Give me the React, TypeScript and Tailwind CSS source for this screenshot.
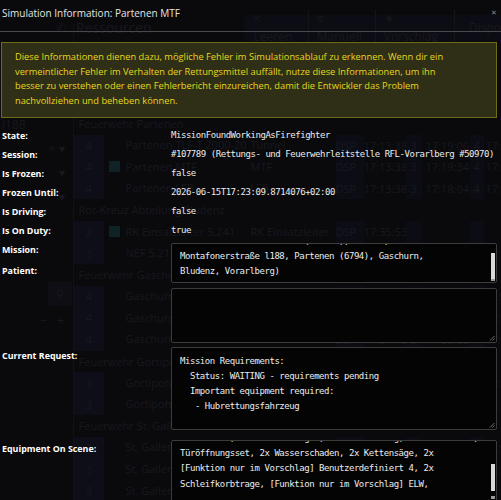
import React from 'react';

type GhostRow = { group?: string; n?: string; name?: string; short?: string; t1?: string; t2?: string; check?: boolean };

const ghostRows: GhostRow[] = [
  { group: 'Feuerwehr Partenen' },
  { n: '4', name: 'Partenen TLF-T 2000-200', short: 'Tunnel', t1: '17:13:38', t2: '17:19:06' },
  { n: '4', name: 'Partenen MTF', short: 'MTF', t1: '17:13:38', t2: '17:19:34', check: true },
  { n: '4', name: 'Partenen LFB', short: 'LFB', t1: '17:13:38', t2: '17:18:04' },
  { group: 'Rot-Kreuz Abteilung Bludenz' },
  { n: '2', name: 'RK Einsatzleiter 5.241', short: 'RK Einsatzleiter', t1: '17:35:53', check: true },
  { n: '3', name: 'NEF 5.211', short: 'NEF', t1: '17:31:12', t2: '17:35:26' },
  { group: 'Feuerwehr Gaschurn' },
  { n: '4', name: 'Gaschurn TLFA 2000', short: 'TLF', t1: '17:31:12', t2: '17:35:34' },
  { n: '4', name: 'Gaschurn LFB-A', short: 'LFB-A', t1: '17:31:12', t2: '17:35:59' },
  { n: '4', name: 'Gaschurn KDOF', short: 'KDOF', t1: '17:31:12', t2: '17:35:55' },
  { group: 'Feuerwehr Gortipohl' },
  { n: '3', name: 'Gortipohl LFBA', short: 'LFBA', t1: '17:31:12', t2: '17:36:00' },
  { n: '3', name: 'Gortipohl LFA', short: 'LFA', t1: '17:31:12', t2: '17:35:39' },
  { group: 'Feuerwehr St. Gallenkirch' },
  { n: '3', name: 'St. Gallenkirch TLF-T', short: 'TLF', t1: '17:31:12', t2: '17:35:53' },
  { n: '3', name: 'St. Gallenkirch KDOF', short: 'KDOF', t1: '17:31:12', t2: '17:36:15' },
  { n: '3', name: 'St. Gallenkirch LFB-C', short: 'LFB-C', t1: '17:31:12', t2: '17:36:22' },
];

// dimmed app behind the dialog
const Backdrop = () => (
  <div className="flex flex-col text-[#18181f] font-['Open_Sans',sans-serif]">
    <div className="h-[46px] flex items-start pt-[15px]">
      <div className="w-[80px] flex justify-end pr-[10px] text-[12px] leading-[26px]">✆</div>
      <div className="w-[178px] text-[14px] leading-[26px]">Ressourcen</div>
      <div className="flex h-[26px] items-center bg-[#0c0d14] text-[12px]">
        <div className="px-[10px] border-r border-[#14141b]">× Leeren</div>
        <div className="px-[8px] border-r border-[#14141b]">≡ Manuell</div>
        <div className="px-[8px] border-r border-[#14141b]">☀ Vorschlag</div>
        <div className="pl-[14px]">Dispo</div>
      </div>
    </div>
    <div className="flex">
      <div className="w-[78px] border-r border-[#111116] flex flex-col text-[12px] pl-[2px] pt-[68px] gap-[6px] -mt-[22px]">
        <div>Objekt</div>
        <div>l188</div>
        <div className="text-right pr-[8px]">× ▾</div>
        <div className="text-right pr-[8px]">▾</div>
        <div className="text-right pr-[8px]">▾</div>
        <div className="ml-[46px] mt-[70px] w-[24px] h-[24px] bg-[#0e0e14] text-center text-[11px] leading-[24px]">⚲</div>
        <div className="flex ml-[38px] gap-[10px]"><span>−</span><span>+</span></div>
      </div>
      <div className="flex-1 flex flex-col text-[11px] pt-[67px]">
        {ghostRows.map((r, i) =>
          r.group ? (
            <div key={i} className="h-[21.6px] leading-[21.6px] pl-[5px]">{r.group}</div>
          ) : (
            <div key={i} className="h-[21.6px] flex items-center">
              <div className="w-[30px] h-full bg-[#0d0e18] text-center leading-[21.6px]">{r.n}</div>
              <div className="w-[22px] flex justify-center">
                {r.check && <div className="w-[11px] h-[11px] bg-[#0f2226]" />}
              </div>
              <div className="w-[120px] whitespace-nowrap overflow-hidden">{r.name}</div>
              <div className="w-[90px] whitespace-nowrap overflow-hidden pl-[5px]">{r.short}</div>
              <div className="w-[28px] bg-[#0c0d14] h-full leading-[21.6px]">DSP</div>
              <div className="w-[42px] leading-[21.6px]">{r.t1}</div>
              <div className="w-[16px] bg-[#0c0d14] h-full leading-[21.6px] text-center">{r.t2 ? '3' : ''}</div>
              <div className="w-[48px] leading-[21.6px] pl-[4px]">{r.t2}</div>
              <div className="w-[14px] bg-[#0c0d14] h-full leading-[21.6px] text-center">{r.t2 ? '4' : ''}</div>
              <div className="leading-[21.6px] pl-[2px]">{r.t2 ? '17:' : ''}</div>
            </div>
          )
        )}
      </div>
    </div>
  </div>
);

const mono = "font-['DejaVu_Sans_Mono',monospace] text-[9px] tracking-[-0.45px] text-[#ececec] whitespace-pre";

const Resize = () => (
  <svg className="absolute right-[1px] bottom-[1px]" width="6" height="6" viewBox="0 0 6 6">
    <path d="M5.5 1 L1 5.5 M5.5 3.5 L3.5 5.5" stroke="#8a8a8a" strokeWidth="0.8" />
  </svg>
);

const Scroll = ({ top, h }: { top: string; h: string }) => (
  <div className={`absolute right-[1px] ${top} ${h} w-[4px] bg-[#d9d9d9]`} />
);

const Box = ({ className, children }: { className: string; children?: React.ReactNode }) => (
  <div className={`relative overflow-hidden border border-[#3c3c3c] bg-[#040405] rounded-[2px] ${className}`}>{children}</div>
);

const Label = ({ children, className = '' }: { children: React.ReactNode; className?: string }) => (
  <div className={`h-[19px] leading-[19px] font-bold text-white whitespace-nowrap ${className}`}>{children}</div>
);

const Val = ({ children }: { children: React.ReactNode }) => (
  <div className={`${mono} h-[19px] leading-[19px]`}>{children}</div>
);

export default function App() {
  return (
    <div className="relative w-[501px] h-[500px] overflow-hidden bg-[#0a0a0d]">
      <Backdrop />

      <div className="absolute inset-0 font-['Open_Sans',sans-serif]">
        <div className="h-[32px] border-b border-[#4a4a4e] flex items-start justify-between pl-[2px] pr-[4px] pt-[5px]">
          <span className="text-[10px] leading-[16px] text-[#e4e4e4]">Simulation Information: Partenen MTF</span>
          <span className="text-[7px] leading-[16px] text-[#8a8a8a]">✕</span>
        </div>

        <div className="mt-[10px] ml-[1px] w-[496px] h-[76px] border border-[#6e6c18] bg-[#2f2e17] px-[13px] pt-[7px] text-[9.3px] leading-[14.7px] text-[#e6d81c] whitespace-nowrap">
          Diese Informationen dienen dazu, mögliche Fehler im Simulationsablauf zu erkennen. Wenn dir ein
          <br />
          vermeintlicher Fehler im Verhalten der Rettungsmittel auffällt, nutze diese Informationen, um ihn
          <br />
          besser zu verstehen oder einen Fehlerbericht einzureichen, damit die Entwickler das Problem
          <br />
          nachvollziehen und beheben können.
        </div>

        <div className="mt-[7.5px] pl-[2px] grid grid-cols-[169px_326px] text-[8.9px]">
          <Label>State:</Label>
          <Val>MissionFoundWorkingAsFirefighter</Val>
          <Label>Session:</Label>
          <Val>#107789 (Rettungs- und Feuerwehrleitstelle RFL-Vorarlberg #50970)</Val>
          <Label>Is Frozen:</Label>
          <Val>false</Val>
          <Label>Frozen Until:</Label>
          <Val>2026-06-15T17:23:09.8714076+02:00</Val>
          <Label>Is Driving:</Label>
          <Val>false</Val>
          <Label>Is On Duty:</Label>
          <Val>true</Val>

          <Label>Mission:</Label>
          <Box className="row-span-2 mt-[3.5px] h-[40px]">
            <div className={`${mono} leading-[15.3px] pl-[8px] -mt-[10.5px]`}>
              {'Einsatzstelle: Kraftwerk (Tunnel), Parten,\nMontafonerstraße l188, Partenen (6794), Gaschurn,\nBludenz, Vorarlberg)'}
            </div>
            <Scroll top="top-[9px]" h="h-[27px]" />
            <div className="absolute right-[1px] bottom-[1px] w-[4px] h-[2px] bg-[#9a9a9a]" />
          </Box>
          <Label>Patient:</Label>

          <div />
          <Box className="mt-[5px] h-[55px]">
            <Resize />
          </Box>

          <Label className="mt-[2.5px]">Current Request:</Label>
          <Box className="mt-[4px] h-[83px]">
            <div className={`${mono} leading-[15.3px] pl-[8px] pt-[5.5px]`}>
              {'Mission Requirements:\n  Status: WAITING - requirements pending\n  Important equipment required:\n   - Hubrettungsfahrzeug'}
            </div>
            <Resize />
          </Box>

          <Label className="mt-[8.5px]">Equipment On Scene:</Label>
          <Box className="mt-[10px] h-[70px]">
            <div className={`${mono} leading-[15.2px] pl-[8px] -mt-[10px]`}>
              {'Atemschutz, 2x Stromerzeuger, 2x Beleuchtung, 2x Hebekissen,\nTüröffnungsset, 2x Wasserschaden, 2x Kettensäge, 2x\n[Funktion nur im Vorschlag] Benutzerdefiniert 4, 2x\nSchleifkorbtrage, [Funktion nur im Vorschlag] ELW,'}
            </div>
            <Scroll top="top-[23px]" h="h-[27px]" />
            <div className="absolute right-[1px] top-[55px] w-[4px] h-[3px] bg-[#9a9a9a]" />
          </Box>
        </div>
      </div>
    </div>
  );
}
